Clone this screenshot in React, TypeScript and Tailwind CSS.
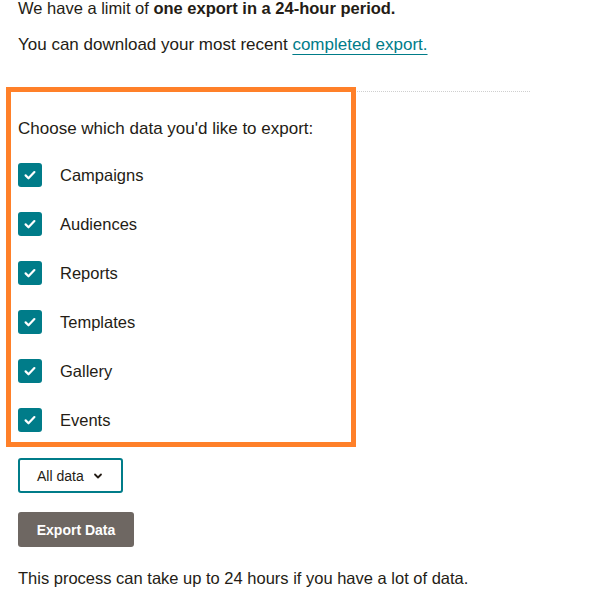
import { useState } from 'react';

const dataTypes = ['Campaigns', 'Audiences', 'Reports', 'Templates', 'Gallery', 'Events'];

function CheckRow({ label }: { label: string }) {
  const [checked, setChecked] = useState(true);
  return (
    <label className="flex items-center h-6 cursor-pointer" onClick={() => setChecked(!checked)}>
      <span
        className={
          checked
            ? 'flex items-center justify-center w-6 h-6 rounded-[3px] bg-[#007c89]'
            : 'flex items-center justify-center w-6 h-6 rounded-[3px] border-2 border-[#007c89] bg-white'
        }
      >
        {checked && (
          <svg width="24" height="24" viewBox="0 0 24 24" fill="none">
            <path d="M7.6 12.4l2.9 2.9 5.9-6.2" stroke="#fff" strokeWidth="2.2" strokeLinecap="round" strokeLinejoin="round" />
          </svg>
        )}
      </span>
      <span className="ml-[18px] text-[16.5px] text-[#241c15]">{label}</span>
    </label>
  );
}

export default function App() {
  return (
    <div className="relative min-h-screen bg-white px-[18px] overflow-hidden font-['Liberation_Sans',Arial,sans-serif] text-[#241c15]">
      <p className="-mt-1 text-[16.5px] leading-6">
        We have a limit of <span className="font-semibold">one export in a 24-hour period.</span>
      </p>
      <p className="mt-[13px] text-[17px] leading-6">
        You can download your most recent{' '}
        <a href="#" className="text-[#007c89] underline underline-offset-4 decoration-1">
          completed export.
        </a>
      </p>

      <div className="mt-[34px] w-[512px] border-t border-dotted border-[#cfcfcf]" />

      <p className="mt-[25px] text-[17px] leading-6">Choose which data you'd like to export:</p>

      <div className="mt-[22px] flex flex-col gap-[25px]">
        {dataTypes.map((t) => (
          <CheckRow key={t} label={t} />
        ))}
      </div>

      <button className="mt-[26px] flex items-center h-[35px] w-[105px] pl-[17px] border-2 border-[#007c89] rounded-[3px] bg-white text-sm text-[#241c15]">
        All data
        <svg className="ml-[9px]" width="10" height="10" viewBox="0 0 10 10" fill="none">
          <path d="M2 3.5l3 3 3-3" stroke="#241c15" strokeWidth="1.8" strokeLinecap="round" strokeLinejoin="round" />
        </svg>
      </button>

      <button className="mt-[19px] block h-[35px] w-[116px] rounded-[3px] bg-[#6e6762] text-white text-sm font-bold">
        Export Data
      </button>

      <p className="mt-[19px] text-[16.5px] leading-6">
        This process can take up to 24 hours if you have a lot of data.
      </p>

      {/* highlight annotation around the data picker */}
      <div className="absolute left-[6px] top-[87px] w-[350px] h-[360px] border-[5px] border-[#ff8029] pointer-events-none" />
    </div>
  );
}
